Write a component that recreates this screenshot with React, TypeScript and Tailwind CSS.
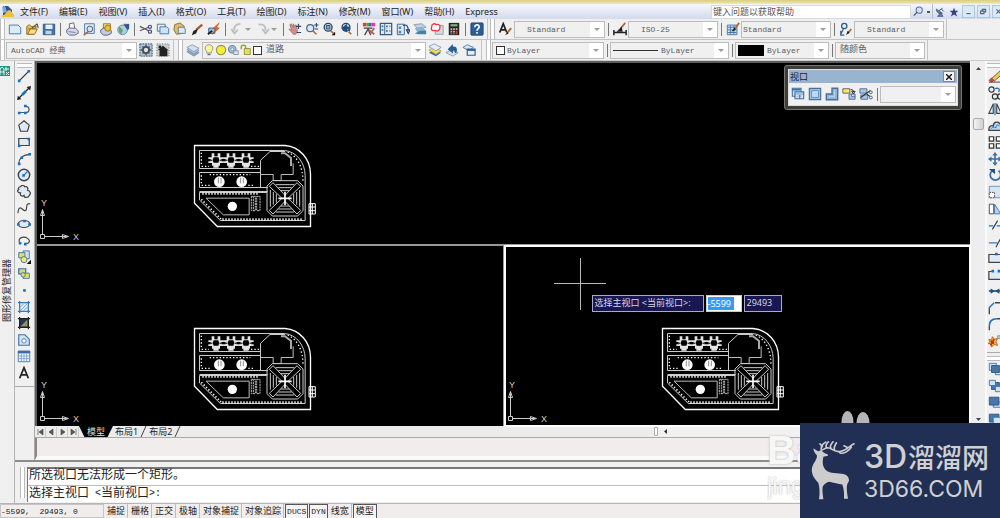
import type { ReactNode } from 'react';

const BLUE = '#3f6fa3';
const PALE = '#cfe2f3';

// All toolbar glyphs share a 16x16 grid
const icons: Record<string, ReactNode> = {
  new: <path d="M1.500 3.500h10l3 3v7h-13z" fill="#dcebf8" stroke={BLUE} />,
  open: (
    <>
      <path d="M2 5l3-2 2 2h6l-3 9H2z" fill="#e8bd4d" stroke="#8d6c22" />
      <path d="M8 7l6-5M14 2l1 5M4 8h8" stroke="#5d5533" strokeWidth="1.300" fill="none" />
      <path d="M3 14l3-6h8l-3 6z" fill="#f6dc85" stroke="#8d6c22" />
    </>
  ),
  save: (
    <>
      <path d="M1.500 2.500h13v12h-13z" fill="#3e73b1" stroke="#2d527e" />
      <path d="M4 3h8v5H4z" fill="#e9eff5" />
      <path d="M4 10h7v4H4z" fill="#c3d0de" />
    </>
  ),
  print: (
    <>
      <path d="M5 8V2l5-1 1 6" fill="#fff" stroke="#555c75" />
      <path d="M2 9l3-2h7l3 3v3l-4 2H5l-3-3z" fill="#d6d9e5" stroke="#555c75" />
      <path d="M4 11l8 1" stroke="#6a6fc1" />
    </>
  ),
  preview: (
    <>
      <path d="M3 2h11v11H3z" fill="#e4eef8" stroke={BLUE} />
      <circle cx="9" cy="8" r="3.300" fill="#d1e4f4" stroke="#38526e" />
      <path d="M7 11l-5 4" stroke="#a66b3a" strokeWidth="2" />
    </>
  ),
  publish: (
    <>
      <path d="M5 2h8v6H5z" fill="#f3e18a" stroke="#83733b" />
      <path d="M2 9l3-2h6l3 3v3l-4 2H5l-3-3z" fill="#c4cce1" stroke="#4d5b7b" />
      <circle cx="10" cy="7" r="3.500" fill="#edbd2c" stroke="#8b7026" />
    </>
  ),
  globe: (
    <>
      <circle cx="7.500" cy="9" r="5.500" fill="#a9cfe8" stroke="#6388a5" />
      <path d="M4 5l4 4-2 5c-3-2-4-6-2-9z" fill="#69a467" />
      <path d="M8 2h5v6z" fill="#c96b3d" />
      <path d="M9 3l4 6 2-1V2z" fill="#285c93" />
    </>
  ),
  cut: (
    <>
      <path d="M1 5l10 5M1 10l10-4" stroke="#555" strokeWidth="1.300" />
      <circle cx="12.500" cy="5.500" r="1.800" fill="none" stroke="#4b4f79" strokeWidth="1.400" />
      <circle cx="12.500" cy="11" r="1.800" fill="none" stroke="#4b4f79" strokeWidth="1.400" />
    </>
  ),
  copy: (
    <>
      <path d="M1.500 2.500h9v8h-9z" fill="#e2eef8" stroke={BLUE} />
      <path d="M4.500 5.500h8l2 2v6h-10z" fill={PALE} stroke={BLUE} />
    </>
  ),
  paste: (
    <>
      <path d="M2 3l6-2 5 4-2 8-7 1-3-5z" fill="#e1bd69" stroke="#81643a" />
      <path d="M6 6h6l2 2v5H6z" fill="#dce9f4" stroke="#597490" />
    </>
  ),
  brush: (
    <>
      <path d="M14 3L7 9" stroke="#a8552b" strokeWidth="2.500" />
      <path d="M9 8l-2 5-5 2 2-5z" fill="#222" />
    </>
  ),
  block: (
    <>
      <path d="M2 7h7v6H2z" fill="#9fc2e8" stroke="#2a4f83" />
      <path d="M14 1L7 7l3 1-4 6 8-7-3-1z" fill="#e6672a" stroke="#963a15" strokeWidth=".5" />
      <path d="M1 14l5-4" stroke="#222" strokeWidth="2" />
    </>
  ),
  undo: <path d="M12 2C7 2 4 5 5 10M1.500 8L5 13l4-4" stroke="#b9bcc0" strokeWidth="2" fill="none" />,
  redo: <path d="M3 3c6-1 8 2 8 7M7 8l4 5 4-5" stroke="#b9bcc0" strokeWidth="2" fill="none" />,
  pan: (
    <>
      <path d="M2 3l2-1 2 4V2l2 3 1-2 2 7-2 4H6L1 8l3 1z" fill="#cf8f8b" stroke="#985d5c" strokeWidth=".7" />
      <path d="M12 2v6M9 5h6M10 12h5" stroke="#27446e" strokeWidth="1.300" />
    </>
  ),
  zoom: (
    <>
      <circle cx="6" cy="7" r="4" fill="#d8e8f5" stroke="#4d6684" strokeWidth="1.400" />
      <path d="M9 10l4 4" stroke="#b46a3e" strokeWidth="2" />
      <path d="M13 1v5M10.500 3.500h5M11 8h4" stroke="#27446e" strokeWidth="1.200" />
    </>
  ),
  zoomwin: (
    <>
      <circle cx="7" cy="6" r="4.500" fill="#c9dff2" stroke="#2f4562" strokeWidth="1.500" />
      <path d="M5 4h4v4H5z" fill="#7fa9d0" stroke="#2f4562" />
      <path d="M10 10l3 3" stroke="#b46a3e" strokeWidth="2" />
      <path d="M15 11v4h-4z" fill="#111" />
    </>
  ),
  zoomprev: (
    <>
      <circle cx="8" cy="6" r="4.500" fill="#bdd7ee" stroke="#2f4562" strokeWidth="1.500" />
      <path d="M3 7l6-5v3c4 0 5 3 3 6-1-3-2-3-3-2v3z" fill="#1f4c84" />
      <path d="M11 11l3 3" stroke="#b46a3e" strokeWidth="2" />
    </>
  ),
  props: (
    <>
      <path d="M1 1h4v4H1z" fill="#e33" />
      <path d="M5 1h3v4H5z" fill="#4a4" />
      <path d="M8 1h3v4H8z" fill="#36c" />
      <path d="M11 1h4v4h-4z" fill="#e3a" />
      <path d="M2 7h10M3 15l4-7 3 7" stroke="#444" strokeWidth="1.500" fill="none" />
      <path d="M8 9l6 5M14 7l-5 7" stroke="#b5606b" strokeWidth="2" />
    </>
  ),
  dcenter: (
    <>
      <path d="M1.500 1.500h13v13h-13z" fill="#dcebf9" stroke="#345b8a" strokeWidth="1.400" />
      <path d="M6.500 2v12" stroke="#345b8a" />
      <path d="M3 4h2v2H3zM3 8h2v2H3zM8 4h2v2H8zM12 4h1v2h-1zM8 9h2v2H8zM12 9h1v2h-1z" fill="#4c6f97" />
      <path d="M8 7h2v1H8z" fill="#e5b22f" />
    </>
  ),
  toolpal: (
    <>
      <path d="M1.500 2.500h8v12h-8z" fill="#dcebf9" stroke="#345b8a" />
      <path d="M3 5h3v3H3zM3 10h3v3H3z" fill="#5c88b7" />
      <path d="M8 4c5-2 6 2 6 6M12 9l2 4 2-4z" fill="none" stroke="#27446e" strokeWidth="1.300" />
    </>
  ),
  sheets: (
    <>
      <path d="M1 3l9-1 5 4-9 2z" fill="#c8d4de" stroke="#8695a3" />
      <path d="M2 7l8-2 5 5-9 3z" fill="#86b4d2" />
      <path d="M2 13l6-3h7v4H6z" fill="#4d7fa1" />
    </>
  ),
  markup: (
    <>
      <path d="M6 4h9v10H6z" fill="#d9dde2" stroke="#919aa4" />
      <path d="M3 3c2-2 4 0 4 0s3-1 4 1-0 3 0 4-2 3-4 2-4 1-5-1 0-3 0-4 0-2 1-2z" fill="#fff" stroke="#e33841" strokeWidth="1.500" />
    </>
  ),
  calc: (
    <>
      <path d="M2 1h12v14H2z" fill="#262626" />
      <path d="M4 2.500h8V5H4z" fill="#79b477" />
      <path d="M4 7h2v2H4zM7 7h2v2H7zM10 7h2v2h-2zM4 10h2v2H4zM7 10h2v2H7zM4 13h2v1H4zM7 13h2v1H7z" fill="#d7b1ae" />
      <path d="M10 10h2v4h-2z" fill="#d83b36" />
    </>
  ),
  help: (
    <>
      <rect x="1" y="1" width="14" height="14" rx="1" fill="#2c5f98" stroke="#1c426d" />
      <path d="M5.500 6c0-4 5.500-3.500 5 0-.3 1.500-2.500 1.800-2.500 4M8 11.500v2" stroke="#fff" strokeWidth="1.800" fill="none" />
    </>
  ),
  textstyle: (
    <>
      <path d="M2 12L6 2l4 10M3.500 9h5" stroke="#222" strokeWidth="2" fill="none" />
      <path d="M15 7l-5 6" stroke="#b06a33" strokeWidth="2.200" />
      <path d="M11 11l-3 4 4-2z" fill="#222" />
    </>
  ),
  dimstyle: (
    <>
      <path d="M1 9v6M15 9v6M1 12h14" stroke="#222" strokeWidth="1.700" />
      <path d="M14 1L9 7" stroke="#b06a33" strokeWidth="2" />
      <path d="M10 5l-6 6h7z" fill="#222" />
    </>
  ),
  tablestyle: (
    <>
      <path d="M1.500 3.500h11v11h-11z" fill="#d1e4f8" stroke={BLUE} />
      <path d="M2 6h10M2 9h10M2 12h10M5 4v10M9 4v10" stroke={BLUE} />
      <path d="M15 1l-5 7" stroke="#b06a33" strokeWidth="2" />
      <path d="M10 6l-4 5 5-2z" fill="#222" />
    </>
  ),
  mleader: (
    <>
      <circle cx="6" cy="4.500" r="3" fill="#e4f1fb" stroke="#286095" strokeWidth="1.500" />
      <path d="M5 8l-3 6M2 10v5h4" stroke="#286095" strokeWidth="1.400" fill="none" />
      <path d="M14 8l-4 5" stroke="#b06a33" strokeWidth="2" />
      <path d="M10 10l-2 5 4-3z" fill="#222" />
    </>
  ),
  gear: (
    <>
      <path d="M1 1h14v14H1z" fill="#a7c4df" stroke="#345" strokeDasharray="2 1" />
      <circle cx="8" cy="8" r="3.500" fill="#dbe2e9" stroke="#4b4b4b" strokeWidth="2" />
      <path d="M8 2v3M8 11v3M2 8h3M11 8h3M4 4l2 2M10 10l2 2M12 4l-2 2M6 10l-2 2" stroke="#4b4b4b" strokeWidth="1.500" />
    </>
  ),
  home: (
    <>
      <path d="M1 1h14v14H1z" fill="#c9ccd0" stroke="#555" strokeDasharray="1 2" />
      <path d="M8 3l6 5h-1v7H4V8H2z" fill="#222" />
      <path d="M3 3h3v3H3z" fill="#222" />
    </>
  ),
  layers: (
    <>
      <path d="M1 10l6-3 8 4-6 4z" fill="#8fabc7" stroke="#62809f" strokeWidth=".7" />
      <path d="M1 7.500l6-3 8 4-6 4z" fill="#b1c9df" stroke="#62809f" strokeWidth=".7" />
      <path d="M1 5l6-3 8 4-6 4z" fill="#d3e1ed" stroke="#62809f" strokeWidth=".7" />
    </>
  ),
  bulb: (
    <>
      <path d="M5 10C1 6 3 1 8 1s7 5 3 9v2H5z" fill="#fbf59a" stroke="#87815b" />
      <path d="M6 13h4v2H6z" fill="#5a739a" />
    </>
  ),
  sun: <circle cx="8" cy="8" r="6.200" fill="#f7ec35" stroke="#918f5c" strokeWidth="1.400" />,
  vpfreeze: (
    <>
      <circle cx="7" cy="7" r="5" fill="#a7bfd4" stroke="#6886a4" strokeWidth="1.500" />
      <circle cx="7" cy="7" r="2" fill="#eee" stroke="#6886a4" />
      <path d="M9 9h6v5H9z" fill="#dfe6ec" stroke="#6886a4" />
    </>
  ),
  lock: (
    <>
      <path d="M3 7V4c0-3 6-3 6 0v3" fill="none" stroke="#a3a33b" strokeWidth="2" />
      <path d="M7 6h8v8H7z" fill="#e4df57" stroke="#807d2d" />
    </>
  ),
  layermake: (
    <>
      <path d="M1 11l6-3 8 3-6 4z" fill="#3f6fa3" />
      <path d="M1 8l6-3 8 4-6 4z" fill="#f5df59" stroke="#877a2e" strokeWidth=".6" />
      <path d="M1 4l6-3 8 4-6 4z" fill="#e8f0f7" stroke="#55789b" strokeWidth=".7" />
    </>
  ),
  layerprev: (
    <>
      <path d="M1 11l6-3 8 3-6 4z" fill="#d9e5f0" stroke="#55789b" strokeWidth=".7" />
      <path d="M3 7l6-6v3c5-1 6 5 3 8-1-3-2-4-3-3v3z" fill="#2a5c93" />
    </>
  ),
  layerstate: (
    <>
      <path d="M1 5l5-3 7 3-5 4z" fill="#d9e5f0" stroke="#55789b" />
      <path d="M6 7h9v7H6z" fill="#e7f0f8" stroke="#2a5c93" strokeWidth="1.300" />
      <path d="M6 7h9v2H6z" fill="#2a5c93" />
    </>
  ),
  // draw toolbar
  line: (
    <>
      <path d="M3 13L13 3" stroke="#333" strokeWidth="1.400" />
      <path d="M1 12h3v3H1zM12 1h3v3h-3z" fill="#1770c7" />
    </>
  ),
  xline: (
    <>
      <path d="M2 14L14 2" stroke="#222" strokeWidth="1.400" />
      <path d="M0 16l1-5 4 4zM16 0l-5 1 4 4z" fill="#222" />
      <path d="M6 10l4-4" stroke="#1770c7" strokeWidth="3" />
    </>
  ),
  pline: (
    <>
      <path d="M2 12h8c5 0 5-7 0-7" stroke="#555" strokeWidth="1.400" fill="none" />
      <path d="M1 11h3v3H1zM8 11h3v3H8zM8 3h3v3H8z" fill="#1770c7" />
    </>
  ),
  polygon: <path d="M8 2l6 5-2 7H4L2 7z" fill="#deebf6" stroke="#444" strokeWidth="1.400" />,
  rect: (
    <>
      <path d="M2 4h12v8H2z" fill="#deebf6" stroke="#444" strokeWidth="1.400" />
      <path d="M1 11h3v3H1zM12 3h3v3h-3z" fill="#1770c7" />
    </>
  ),
  arc: (
    <>
      <path d="M2 14c0-6 4-11 12-11" stroke="#444" strokeWidth="1.300" fill="none" />
      <path d="M1 12h3v3H1zM4 5h3v3H4zM13 1h3v3h-3z" fill="#1770c7" />
    </>
  ),
  circle: (
    <>
      <circle cx="8" cy="8" r="6.500" fill="#deebf6" stroke="#444" strokeWidth="1.700" />
      <path d="M7 9l5-5" stroke="#1770c7" strokeWidth="1.300" />
      <path d="M6 7h3v3H6z" fill="#1770c7" />
    </>
  ),
  cloud: (
    <path
      d="M4 2c1-2 4-2 5 0 3-1 4 2 3 4 4 1 4 4 2 6-1 3-6 3-6 0-3 2-5-1-4-3-4 0-4-3-2-4-1-1 0-3 2-3z"
      fill="#deebf6"
      stroke="#444"
      strokeWidth="1.400"
    />
  ),
  spline: <path d="M1 14c1-9 4-6 6-4s4 1 4-3 2-4 4-4" stroke="#444" strokeWidth="1.300" fill="none" />,
  ellipse: (
    <>
      <ellipse cx="8" cy="8" rx="6.500" ry="4" fill="#deebf6" stroke="#444" strokeWidth="1.400" />
      <path d="M0 7h3v3H0zM13 7h3v3h-3zM7 3h3v3H7z" fill="#1770c7" />
    </>
  ),
  ellipsearc: (
    <>
      <path d="M3 10C0 4 8 2 12 5c4 3 2 6-2 6" fill="#eef3f8" stroke="#444" strokeWidth="1.300" />
      <path d="M2 9h3v3H2zM8 10h3v3H8z" fill="#1770c7" />
    </>
  ),
  insert: (
    <>
      <path d="M7 1h7v9H7z" fill="#cfe2f3" stroke={BLUE} />
      <path d="M2 3h7v6H2z" fill="#dfdf63" stroke={BLUE} />
      <circle cx="8" cy="11" r="3.500" fill="#eee96c" stroke={BLUE} />
      <path d="M16 11v5h-5z" fill="#111" />
    </>
  ),
  makeblock: (
    <>
      <path d="M2 2h8v6H2z" fill="#cbd98c" stroke={BLUE} strokeWidth="1.400" />
      <path d="M7 7h7v6H7z" fill="#e8e269" stroke={BLUE} />
      <circle cx="7" cy="9" r="2.500" fill="#e8e269" stroke={BLUE} />
    </>
  ),
  point: <path d="M7 7h3v3H7z" fill="#1770c7" />,
  hatch: (
    <>
      <path d="M3 3h10v10H3z" fill="#dceaf6" />
      <path d="M4 8l4-4M4 12l8-8M8 12l4-4" stroke="#7ba7cf" />
      <path d="M3 1v14M13 1v14M1 3h14M1 13h14" stroke="#3a78b5" strokeWidth="1.400" />
    </>
  ),
  gradient: (
    <>
      <path d="M3 3h10v10H3z" fill="#26355a" />
      <path d="M4 12l8-8v8z" fill="#96965b" />
      <path d="M3 1v14M13 1v14M1 3h14M1 13h14" stroke="#222" strokeWidth="1.400" />
    </>
  ),
  region: (
    <>
      <path d="M2 2h7l5 5v7H2z" fill="#d3e5f5" stroke={BLUE} strokeWidth="1.300" />
      <circle cx="8" cy="9" r="2.500" fill="#fff" stroke={BLUE} />
    </>
  ),
  table: (
    <>
      <path d="M1.500 2.500h13v12h-13z" fill="#eff6fc" stroke="#4773a8" />
      <path d="M1 2h14v3H1z" fill="#386dab" />
      <path d="M2 8h12M2 11h12M5 5v9M8 5v9M11 5v9" stroke="#7ba4d1" />
    </>
  ),
  mtext: <path d="M3 14L8 2l5 12M4.500 10h7" stroke="#222" strokeWidth="2" fill="none" />,
  // modify toolbar
  erase: (
    <>
      <path d="M15 1L4 11l3 3L17 5z" fill="#efc85d" stroke="#6b5528" />
      <path d="M4 10l-3 3 3 2 3-2z" fill="#e04938" stroke="#733" strokeWidth=".6" />
      <path d="M1 15h15" stroke="#333" />
    </>
  ),
  copyobj: (
    <>
      <circle cx="4" cy="4" r="3" fill="#e3eff9" stroke="#333" strokeWidth="1.300" />
      <path d="M8 3c4-2 6 1 4 4" stroke="#2a68ac" strokeWidth="1.400" fill="none" />
      <circle cx="8" cy="12" r="3" fill="#e3eff9" stroke="#333" strokeWidth="1.300" />
      <circle cx="14" cy="12" r="3" fill="none" stroke="#333" strokeWidth="1.300" />
    </>
  ),
  mirror: (
    <>
      <path d="M6 2v11H1z" fill="#e3eff9" stroke="#444" strokeWidth="1.300" />
      <path d="M10 2v11h5z" fill="#e3eff9" stroke="#444" strokeWidth="1.300" />
      <path d="M8 1v14" stroke="#1770c7" strokeWidth="1.300" />
    </>
  ),
  offset: (
    <>
      <path d="M1 12c0-4 3-5 5-4 0-5 6-6 8-2l2 1v6H1z" fill="#b9d5ef" stroke="#444" strokeWidth="1.500" />
      <path d="M4 11c1-2 3-2 5-1 0-3 2-4 4-2" fill="none" stroke="#1770c7" />
    </>
  ),
  array: <path d="M1.500 2h5v5h-5zM9.500 2h5v5h-5zM1.500 10h5v5h-5zM9.500 10h5v5h-5z" fill="#fff" stroke="#333" strokeWidth="1.400" />,
  move: (
    <>
      <path d="M8 2v12M2 8h12" stroke="#3b6fa5" strokeWidth="1.800" />
      <path d="M8 0l3 4H5zM8 16l3-4H5zM0 8l4-3v6zM16 8l-4-3v6z" fill="#3b6fa5" />
    </>
  ),
  rotate: (
    <>
      <path d="M5 3a6 6 0 1 0 7 0" stroke="#3b6fa5" strokeWidth="2" fill="none" />
      <path d="M1 1h7v6z" fill="#2a4f7b" />
    </>
  ),
  scale: (
    <>
      <path d="M1.500 1.500h14v13h-14z" fill="#d5e5f3" stroke="#6d8eaf" />
      <path d="M1.500 8.500h6v6h-6z" fill="#fff" stroke="#444" strokeDasharray="2 1" />
    </>
  ),
  stretch: (
    <>
      <path d="M1.500 2.500h5v11h-5z" fill="#fff" stroke="#444" />
      <path d="M7.500 2.500l7 11h-7z" fill="#b9d5ef" stroke={BLUE} />
    </>
  ),
  trim: (
    <>
      <path d="M1 9h5M10 9h6" stroke="#1770c7" strokeWidth="1.300" />
      <path d="M5 13L11 3" stroke="#333" strokeWidth="1.200" />
    </>
  ),
  extend: (
    <>
      <path d="M1 9h10" stroke="#1770c7" strokeWidth="1.300" />
      <path d="M9 14L15 3" stroke="#333" strokeWidth="1.200" />
    </>
  ),
  breakpt: (
    <>
      <path d="M1 4h15v9H1z" fill="#dfebf6" stroke="#444" strokeWidth="1.400" />
      <path d="M8 2h3v3H8z" fill="#1770c7" />
    </>
  ),
  breakln: (
    <>
      <path d="M5 4H1v9h15V4h-3" fill="#dfebf6" stroke="#444" strokeWidth="1.400" />
      <path d="M4 2h3v3H4zM11 2h3v3h-3z" fill="#1770c7" />
    </>
  ),
  join: (
    <>
      <path d="M1 8h14" stroke="#234f7e" strokeWidth="1.800" />
      <path d="M3 5l5 3-5 3zM13 5L8 8l5 3z" fill="#234f7e" />
    </>
  ),
  chamfer: (
    <>
      <path d="M1.500 15V8M8 2h8" stroke="#444" strokeWidth="1.500" />
      <path d="M1 8l6-6" stroke="#1770c7" strokeWidth="1.600" />
    </>
  ),
  fillet: (
    <>
      <path d="M1.500 15v-5M10 2h6" stroke="#444" strokeWidth="1.500" />
      <path d="M1.500 10c0-5 3-8 8.500-8" stroke="#1770c7" strokeWidth="1.900" fill="none" />
    </>
  ),
  explode: (
    <>
      <path d="M1 6l3 1 1-4 2 3 4-1-2 4 2 4-4-1-3 3-1-4H0l2-2z" fill="#f7c434" stroke="#b4591f" />
      <path d="M3 8l4 3M7 6l-4 7" stroke="#c5281d" strokeWidth="2" />
      <path d="M11 2h3v3h-3z" fill="#ccd6df" stroke="#888" />
    </>
  ),
  front: (
    <>
      <path d="M1.500 1.500h8v8h-8zM8.500 8.500h7v6h-7z" fill="#d1e3f3" stroke={BLUE} />
      <path d="M4 4h9v8H4z" fill="#4676ab" stroke="#2e5581" />
    </>
  ),
  back: (
    <>
      <path d="M4 4h9v8H4z" fill="#4676ab" stroke="#2e5581" />
      <path d="M1.500 1.500h7v6h-7zM8.500 8.500h7v6h-7z" fill="#d1e3f3" stroke={BLUE} />
    </>
  ),
  above: (
    <>
      <path d="M6 8h9v6H6z" fill="#d1e3f3" stroke={BLUE} />
      <path d="M1.500 2.500h11v9h-11z" fill="#4676ab" stroke="#2e5581" />
    </>
  ),
  under: (
    <>
      <path d="M1.500 2.500h11v9h-11z" fill="#4676ab" stroke="#2e5581" />
      <path d="M6 6h9v8H6z" fill="#d1e3f3" stroke={BLUE} />
    </>
  ),
  // viewport toolbar
  vpdialog: (
    <>
      <path d="M1.500 1.500h10v9h-10z" fill="#cfe2f3" stroke={BLUE} strokeWidth="1.200" />
      <path d="M1 2h10v2H1zM5 6h10v3H5z" fill={BLUE} />
      <path d="M4.500 5.500h10v8h-10zM10 9v5" fill="#cfe2f3" fillOpacity=".7" stroke={BLUE} strokeWidth="1.200" />
    </>
  ),
  vpsingle: (
    <>
      <path d="M1.500 1.500h13v13h-13z" fill="#9fbfe0" stroke="#4a6f98" strokeWidth="1.300" />
      <path d="M4 4h8v8H4z" fill="#b9d8f2" stroke="#6490be" />
    </>
  ),
  vppoly: (
    <>
      <path d="M8 1.500h6.500v13h-13V8H8z" fill="#8fb5dc" stroke="#4a6f98" strokeWidth="1.600" />
      <path d="M11 4v7H4" stroke="#c8def2" fill="none" />
    </>
  ),
  vpobject: (
    <>
      <path d="M1 2h8v5H1z" fill="#f4ea70" stroke="#555" />
      <path d="M8 8h7v6H8zM11 8v3h4" fill="#a8c6e4" stroke="#4a6f98" />
      <path d="M10 3c3 0 3 1 3 3M11 5l2 3 2-3z" fill="none" stroke="#222" />
    </>
  ),
  vpclip: (
    <>
      <path d="M1 2h8v5H1zM2 9h8v5H2z" fill="#a8c6e4" stroke="#4a6f98" />
      <path d="M2 12l11-8M9 8l6 5" stroke="#333" strokeWidth="1.200" />
      <circle cx="13.500" cy="6" r="1.600" fill="#fff" stroke="#344d7a" />
      <circle cx="13.500" cy="12" r="1.600" fill="#fff" stroke="#344d7a" />
    </>
  ),
  search: (
    <>
      <circle cx="9" cy="6" r="4.500" fill="#d6e3f4" stroke="#5b6fa6" strokeWidth="1.500" />
      <path d="M6 9l-5 5" stroke="#4d5f97" strokeWidth="2" />
    </>
  ),
  satellite: (
    <>
      <path d="M2 3c0 6 5 9 10 7zM4 15h9l-4-6z" fill="#6378ab" stroke="#3a4b80" />
      <path d="M6 6l6-4M10 3l4 4" stroke="#3a4b80" strokeWidth="1.500" />
    </>
  ),
  star: <path d="M8 1l2 5h5l-4 3.500 2 5.500-5-3-5 3 2-5.500L1 6h5z" fill="#35457f" />,
};

function Icon({ name, className = 'w-[14px] h-[14px]' }: { name: string; className?: string }) {
  return (
    <svg viewBox="0 0 16 16" fill="none" aria-hidden="true" className={`shrink-0 ${className}`}>
      {icons[name]}
    </svg>
  );
}

function Tool({ name }: { name: string }) {
  return (
    <button aria-label={name} className="w-[17px] h-full shrink-0 flex items-center justify-center">
      <Icon name={name} />
    </button>
  );
}

const Tools = ({ names }: { names: string[] }) => (
  <>
    {names.map((n) => (
      <Tool key={n} name={n} />
    ))}
  </>
);

const Sep = () => (
  <div className="w-[6px] shrink-0 flex justify-center">
    <div className="w-px h-[13px] bg-[#777]" />
  </div>
);

const Grip = () => <div className="w-[5px] h-full shrink-0 border-x border-[#bdbdbd] bg-white mr-px" />;

const Caret = () => (
  <svg viewBox="0 0 6 3" className="w-[6px] h-[3px]" aria-hidden="true">
    <path d="M0 0h6L3 3z" fill="#9c9c9c" />
  </svg>
);

type ComboProps = { label: string; value: string; className: string; pad?: string; children?: ReactNode };

function Combo({ label, value, className, pad = 'pl-1', children }: ComboProps) {
  return (
    <label className={`h-[17px] shrink-0 flex items-center border border-[#bcbcbc] bg-[#f0f0f0] ${className}`}>
      {children}
      <select
        aria-label={label}
        className={`flex-1 min-w-0 h-full pt-px appearance-none bg-transparent text-[#5c5c5c] outline-none ${pad}`}
      >
        <option>{value}</option>
      </select>
      <span className="w-[14px] h-full bg-white flex items-center justify-center">
        <Caret />
      </span>
    </label>
  );
}

const menus = ['文件(F)', '编辑(E)', '视图(V)', '插入(I)', '格式(O)', '工具(T)', '绘图(D)', '标注(N)', '修改(M)', '窗口(W)', '帮助(H)', 'Express'];

function MenuBar() {
  return (
    <header className="h-[15px] shrink-0 flex items-center bg-linear-to-b from-[#f6f7fc] to-[#d3daec] text-[9px] leading-[14px] text-[#222]">
      <svg viewBox="0 0 12 13" className="w-3 h-[13px] mx-[2px] shrink-0" aria-hidden="true">
        <path d="M1 1h5l4 4v5H1z" fill="#29568b" />
        <path d="M0 2l3-1 2 6-4 1z" fill="#7faed6" />
        <path d="M0 10c4 1 4-5 8-5l4 5v2H0z" fill="#edc238" />
      </svg>
      <nav className="flex gap-[11px] pl-[4px] whitespace-nowrap">
        {menus.map((m) => (
          <button key={m}>{m}</button>
        ))}
      </nav>
      <input
        aria-label="帮助搜索"
        placeholder="键入问题以获取帮助"
        className="ml-auto w-[200px] h-[14px] bg-white border border-[#d5d9e4] px-px placeholder:text-[#555]"
      />
      <button aria-label="搜索" className="w-[22px] h-full flex items-center justify-center gap-[3px] border-r border-[#b9bfd0]">
        <Icon name="search" className="w-[11px] h-[11px]" />
        <span className="w-[3px] h-[2px] bg-[#555]" />
      </button>
      <button aria-label="通讯中心" className="w-[14px] flex justify-center">
        <Icon name="satellite" className="w-[10px] h-[10px]" />
      </button>
      <button aria-label="收藏夹" className="w-[14px] flex justify-center">
        <Icon name="star" className="w-[10px] h-[10px]" />
      </button>
      <div className="flex gap-[2px] pl-px w-[39px] overflow-hidden">
        {['M4 9h5', 'M3 6h4v3H3zM5 6V4h4v3H7', 'M4 4l5 5M9 4l-5 5'].map((d, i) => (
          <button key={i} aria-label={['最小化', '还原', '关闭'][i]} className="w-[13px] h-[13px] shrink-0 border border-[#adc6e0] bg-[#dbe9f7]">
            <svg viewBox="0 0 13 13" aria-hidden="true">
              <path d={d} stroke="#52637c" strokeWidth="1.300" fill="none" />
            </svg>
          </button>
        ))}
      </div>
    </header>
  );
}

function StandardBar() {
  return (
    <div className="h-[21px] shrink-0 flex items-center border-b border-[#c4c4c4] font-['Liberation_Mono','Noto_Sans_CJK_SC',monospace] text-[8px]">
      <Grip />
      <Tools names={['new', 'open', 'save']} />
      <Sep />
      <Tools names={['print', 'preview', 'publish', 'globe']} />
      <Sep />
      <Tools names={['cut', 'copy', 'paste', 'brush', 'block']} />
      <Sep />
      <Tool name="undo" />
      <button aria-label="undo list" className="w-[9px]"><Caret /></button>
      <Tool name="redo" />
      <button aria-label="redo list" className="w-[9px]"><Caret /></button>
      <Sep />
      <Tools names={['pan', 'zoom', 'zoomwin', 'zoomprev']} />
      <Sep />
      <Tools names={['props', 'dcenter', 'toolpal', 'sheets', 'markup', 'calc']} />
      <Sep />
      <Tool name="help" />
      <div className="w-[3px] h-full border-r border-[#c4c4c4] mr-[2px]" />
      <Grip />
      <Tool name="textstyle" />
      <Combo label="文字样式" value="Standard" className="w-[91px] ml-px" pad="pl-3" />
      <Sep />
      <Tool name="dimstyle" />
      <Combo label="标注样式" value="ISO-25" className="w-[90px]" pad="pl-3" />
      <Sep />
      <Tool name="tablestyle" />
      <Combo label="表格样式" value="Standard" className="w-[90px]" pad="pl-px" />
      <Sep />
      <Tool name="mleader" />
      <Combo label="多重引线样式" value="Standard" className="w-[90px]" pad="pl-3" />
      <div className="w-[3px] h-full border-r border-[#c4c4c4]" />
    </div>
  );
}

function LayerBar() {
  return (
    <div className="h-[20px] shrink-0 flex items-center font-['Liberation_Mono','Noto_Sans_CJK_SC',monospace] text-[8px]">
      <Grip />
      <Combo label="工作空间" value="AutoCAD 经典" className="w-[131px]" />
      <Tools names={['gear', 'home']} />
      <div className="w-[3px] h-full border-r border-[#c4c4c4] mr-[4px]" />
      <Grip />
      <Tool name="layers" />
      <Combo label="图层" value="道路" className="w-[224px] ml-px text-[9px]" pad="pl-[4px]">
        {['bulb', 'sun', 'vpfreeze', 'lock'].map((n) => (
          <Icon key={n} name={n} className="w-3 h-3" />
        ))}
        <span className="w-[9px] h-[9px] border border-[#333] bg-white ml-[2px]" />
      </Combo>
      <Tools names={['layermake', 'layerprev', 'layerstate']} />
      <div className="w-[5px] h-full border-r border-[#c4c4c4] mr-[4px]" />
      <Grip />
      <Combo label="颜色" value="ByLayer" className="w-[112px]" pad="pl-[2px]">
        <span className="w-[9px] h-[9px] border border-[#333] bg-white ml-[3px]" />
      </Combo>
      <Sep />
      <Combo label="线型" value="ByLayer" className="w-[119px]" pad="pl-[3px]">
        <span className="w-[45px] h-px bg-[#333] ml-[2px]" />
      </Combo>
      <Sep />
      <Combo label="线宽" value="ByLayer" className="w-[94px]" pad="pl-[3px]">
        <span className="w-[26px] h-[11px] bg-black ml-[2px]" />
      </Combo>
      <Sep />
      <Combo label="打印样式" value="随颜色" className="w-[90px] text-[9px]" />
      <div className="w-[3px] h-full border-r border-[#c4c4c4]" />
    </div>
  );
}

// Site plan: lots, pools and the terraced plaza
function SitePlan() {
  return (
    <svg viewBox="42 39 372 258" className="absolute left-[156px] top-[80px] w-[124px] h-[86px]" fill="none" stroke="#ddd" strokeWidth="3" aria-hidden="true">
      <path d="M46.500 46.500H318C362 50 394 86 394.500 132V289.500H115L46.500 220z" stroke="#fff" strokeWidth="4" />
      <path d="M61.500 61.500H316C352 64 378 98 378.500 136V271.500H124L61.500 210V187.500H264" stroke="#ccc" />
      <path d="M61.500 61.500V115.500H244.500M61.500 127.500H244.500M61.500 127.500V172.500H266M61.500 184.500H266M244.500 172V91L273 64.500H318" stroke="#ccc" />
      <path d="M244.500 133.500H282.500V151.500H306.500V133.500H342.500V100" stroke="#bbb" />
      <path d="M306 70h12l18 14v24" strokeWidth="6" stroke="#aaa" />
      <path d="M326 66C352 78 372 106 372 156" stroke="#fff" strokeWidth="4" strokeDasharray="4 7" />
      <path d="M67 68V108M68 109H90M206 109H244M92 134H214M68 166H96M208 166H222M67 136V160" strokeWidth="4" stroke="#fff" strokeDasharray="4 6" />
      <path d="M70 191H236" stroke="#fff" strokeWidth="6" strokeDasharray="4 5" />
      <path d="M67 208L126 267" stroke="#fff" strokeWidth="5" strokeDasharray="4 6" />
      <path d="M130 268H372" stroke="#fff" strokeWidth="7" strokeDasharray="4 5" />
      {[111, 156, 201].map((x) => (
        <g key={x} transform={`translate(${x} 90)`} stroke="none" fill="#e4e4e4">
          <path d="M-13-20h8v9h10v-9h8v12h10v5h-7v7h7v5H12v8H8v6H-8v-6h-4V9h-11V4h7v-7h-7v-5h10z" />
          <path d="M-7-8H7L10 0 7 8H-7L-10 0z" fill="#000" />
          <path d="M-1-20h2v9h-2zM-16-1h5v3h-5zM11-1h5v3h-5z" fill="#000" />
        </g>
      ))}
      {[121, 188].map((x) => (
        <g key={x} transform={`translate(${x} 155)`}>
          <circle r="16" fill="#fff" stroke="none" />
          <path d="M-3-12V5M5-12V5" stroke="#555" strokeWidth="2" />
        </g>
      ))}
      <path d="M81 204.500H210.500V254.500H133z" stroke="#bbb" />
      <circle cx="160" cy="229" r="14" fill="#fff" stroke="none" />
      <path d="M217 199h12v43h-12zM233 199h10v43h-10zM223 199v43" stroke="#bbb" strokeDasharray="6 2" />
      <g transform="translate(318 205)">
        <path d="M-38-53H38L54-37V37L38 53H-38L-54 37V-37z" stroke="#ccc" />
        <path d="M-28-41H28M-20-32H20M-14-23H14M-28 41H28M-20 32H20M-14 23H14M-44-25V25M-35-19V19M-26-13V13M44-25V25M35-19V19M26-13V13" stroke="#ccc" />
        <path d="M-36-47L0-9 36-47 47-36 9 0 47 36 36 47 0 9-36 47-47 36-9 0-47-36z" fill="#000" stroke="#ccc" />
        <path d="M0-20V20M-20 0H20" stroke="#fff" strokeWidth="5" />
      </g>
      <path d="M390 221h19v31h-19zM390 231h19M390 242h19M400 221v31" stroke="#fff" />
    </svg>
  );
}

function UcsIcon() {
  return (
    <svg viewBox="0 0 48 46" className="absolute left-0 bottom-0 w-12 h-[46px]" fill="none" stroke="#ccc" aria-hidden="true">
      <path d="M3.500 36.500h4v4h-4zM5.500 36V12M8 38.500h22" />
      <path d="M3.500 17.500l2-6 2 6zM25.500 36.500l6 2-6 2z" />
      <text x="4" y="8" fontSize="9" fill="#ccc" stroke="none" fontFamily="Liberation Sans, sans-serif">Y</text>
      <text x="36" y="42" fontSize="9" fill="#ccc" stroke="none" fontFamily="Liberation Sans, sans-serif">X</text>
    </svg>
  );
}

function Pane({ className = '', children }: { className?: string; children?: ReactNode }) {
  return (
    <div className={`relative overflow-hidden bg-black ${className}`}>
      <SitePlan />
      <UcsIcon />
      {children}
    </div>
  );
}

function DynamicInput() {
  return (
    <>
      <svg viewBox="0 0 52 52" className="absolute left-[49px] top-[12px] w-[52px] h-[52px]" aria-hidden="true">
        <path d="M26.500 0v52M0 25.500h52" stroke="#bbb" />
      </svg>
      <div className="absolute left-[87px] top-[49px] flex gap-[2px] h-[17px] text-[9px] leading-[14px] text-[#d5d5e6] whitespace-nowrap">
        <span className="w-[112px] px-[2px] border border-[#a9a9c8] bg-[#191752]">选择主视口 &lt;当前视口&gt;:</span>
        <span className="w-9 p-px bg-white border border-[#ccc] flex">
          <input aria-label="X 坐标" defaultValue="-5599" className="w-[26px] h-full bg-[#3399ff] text-white outline-none" />
        </span>
        <input aria-label="Y 坐标" defaultValue="29493" className="w-[38px] px-[2px] border border-[#a9a9c8] bg-[#191752] outline-none" />
      </div>
    </>
  );
}

function ViewportToolbar() {
  return (
    <section className="absolute right-[8px] top-[2px] w-[178px] rounded-[3px] border border-[#77776f] bg-[#3e3f3b] p-[3px] text-[9px]">
      <div className="bg-[#f0f0f0] border border-[#ddd]">
        <div className="h-[13px] flex items-center justify-between bg-[#99b4d1] pl-px pr-[2px] text-[#222]">
          <span className="leading-[13px]">视口</span>
          <button aria-label="关闭" className="w-3 h-[11px] bg-[#f4f4f4] border border-[#888] flex items-center justify-center">
            <svg viewBox="0 0 6 6" className="w-[6px] h-[6px]" aria-hidden="true">
              <path d="M0 0l6 6M6 0L0 6" stroke="#111" strokeWidth="1.400" />
            </svg>
          </button>
        </div>
        <div className="h-[22px] flex items-center">
          <Tools names={['vpdialog', 'vpsingle', 'vppoly', 'vpobject', 'vpclip']} />
          <Sep />
          <Combo label="视口比例" value="" className="flex-1 mr-px" />
        </div>
      </div>
    </section>
  );
}

function VScroll() {
  return (
    <div className="w-[17px] shrink-0 bg-[#eee] border-r-2 border-l border-[#fafafa] flex flex-col items-center">
      <svg viewBox="0 0 5 3" className="w-[5px] h-[3px] mt-[6px]" aria-hidden="true"><path d="M0 3h5L2.500 0z" fill="#444" /></svg>
      <div className="w-[11px] h-[12px] mt-[48px] rounded-[2px] border border-[#a8a8a8] bg-linear-to-r from-[#f4f4f4] to-[#d0d0d4]" />
      <svg viewBox="0 0 5 3" className="w-[5px] h-[3px] mt-auto mb-[5px]" aria-hidden="true"><path d="M0 0h5L2.500 3z" fill="#444" /></svg>
    </div>
  );
}

function LayoutTabs() {
  return (
    <div className="h-[12px] shrink-0 flex items-center border-b border-[#aaa] bg-[#ececec] text-[9px] leading-[11px] text-[#222]">
      {['M3 2v6M8 2v6L4 5z', 'M7 2v6L3 5z', 'M4 2v6l4-3z', 'M8 2v6M3 2v6l4-3z'].map((d, i) => (
        <button key={i} aria-label={['第一个', '上一个', '下一个', '最后一个'][i]} className="w-[11px] h-[10px] border-r border-[#ccc]">
          <svg viewBox="0 0 10 10" aria-hidden="true"><path d={d} fill="#555" stroke="#555" strokeWidth=".7" /></svg>
        </button>
      ))}
      <button className="w-[34px] h-full bg-black text-[#ddd] [clip-path:polygon(0_0,100%_0,84%_100%,16%_100%)]">模型</button>
      {['布局1', '布局2'].map((t) => (
        <span key={t} className="h-full flex">
          <button className="px-[2px]">{t}</button>
          <svg viewBox="0 0 7 11" className="w-[7px] h-[11px]" aria-hidden="true"><path d="M6 0L1 11" stroke="#444" /></svg>
        </span>
      ))}
      <div className="ml-auto w-[35%] h-full flex items-center gap-[6px] bg-[#f1f1f1]">
        <span className="w-[4px] h-[9px] rounded-[1px] border border-[#aaa] bg-white" />
        <svg viewBox="0 0 3 5" className="w-[3px] h-[5px]" aria-hidden="true"><path d="M3 0v5L0 2.500z" fill="#333" /></svg>
      </div>
    </div>
  );
}

const drawTools = [
  'line', 'xline', 'pline', 'polygon', 'rect', 'arc', 'circle', 'cloud', 'spline', 'ellipse',
  'ellipsearc', 'insert', 'makeblock', 'point', 'hatch', 'gradient', 'region', 'table', 'mtext',
];
const modifyTools = [
  'erase', 'copyobj', 'mirror', 'offset', 'array', 'move', 'rotate', 'scale', 'stretch',
  'trim', 'extend', 'breakpt', 'breakln', 'join', 'chamfer', 'fillet', 'explode',
];

const HGrip = () => <div className="h-[5px] w-full shrink-0 border-y border-[#bbb] bg-white" />;

function VTools({ names, className }: { names: string[]; className: string }) {
  return (
    <div className={`flex flex-col ${className}`}>
      {names.map((n) => (
        <button key={n} aria-label={n} className="flex-1 flex items-center">
          <Icon name={n} />
        </button>
      ))}
    </div>
  );
}

function CommandWindow() {
  return (
    <section className="h-[43px] shrink-0 flex border-t-2 border-[#8c8c8c] bg-[#f0f0f0] pt-[5px] font-['Liberation_Mono','Noto_Sans_CJK_SC',monospace] text-[12px] text-[#222]">
      <div className="w-[5px] h-[31px] ml-[5px] mr-[2px] border-x border-[#bbb] bg-white" />
      <div className="flex-1 h-[35px] border-t-2 border-l border-[#777] bg-white">
        <p className="h-[17px] pl-px leading-[14px] border-b border-[#bbb]">所选视口无法形成一个矩形。</p>
        <label className="flex pl-px leading-[16px] whitespace-pre">
          选择主视口<span className="text-[10px]"> &lt;</span>当前视口<span className="text-[10px]">&gt;:</span>
          <input className="flex-1 h-[15px] outline-none" />
        </label>
      </div>
    </section>
  );
}

const modes = [
  ['捕捉', false], ['栅格', false], ['正交', false], ['极轴', false], ['对象捕捉', false],
  ['对象追踪', false], ['DUCS', true], ['DYN', true], ['线宽', false], ['模型', true],
] as const;

function StatusBar() {
  return (
    <footer className="h-[15px] shrink-0 flex items-center border-t border-[#b5b5b5] bg-[#f1edec] font-['Liberation_Mono','Noto_Sans_CJK_SC',monospace] text-[9px] leading-[12px] text-[#222]">
      <span className="w-[104px] h-full pt-px border border-[#c5c5c5] text-[8px] whitespace-pre">-5599,  29493, 0</span>
      {modes.map(([label, on]) => (
        <button
          key={label}
          className={`h-full ml-px whitespace-nowrap border-r ${on ? 'border-l border-t border-[#555] bg-[#f6f4f4]' : 'pt-[2px] border-[#bbb]'} ${
            label.startsWith('D') ? 'px-px text-[8px]' : 'px-[2px]'
          }`}
        >
          {label}
        </button>
      ))}
    </footer>
  );
}

function Brand() {
  return (
    <div className="absolute right-0 bottom-0 w-[200px] h-[95px] bg-[#222f55] text-[#d0d0d0] flex items-center pl-[11px]">
      <svg viewBox="0 0 132 176" className="w-[44px] h-[59px] shrink-0" fill="#ccc" aria-hidden="true">
        <path d="M7 22c4 2 9 6 14 8l10-3c5 6 11 10 19 12l1 5-14 3c-2 12-4 24 5 37 9 12 29 11 50 14 14 2 22 8 22 20-1 5-5 9-6 14-2 13 1 27 3 41h-12c1-16 0-29-5-43-11-1-26-6-39-8-11 2-16 8-20 15-2 14 1 25 2 37H24c3-17 2-34-2-49C8 112 0 96 3 80c3-14 15-23 15-37-5-5-10-12-11-21z" />
        <path
          d="M31 27C29 14 36 7 44 3M34 16L27 8M31 27c6 0 9-6 17-7 12-2 19 13 38 11 19-1 28-16 43-23M48 20C40 13 48 8 52 2M60 21C54 13 61 9 66 2M71 27c-5-8 2-14 5-22M85 31c-1 6 8 7 19 2 8-4 14-9 17-15M108 18L99 14"
          fill="none"
          stroke="#ccc"
          strokeWidth="5"
          strokeLinecap="round"
        />
      </svg>
      <div className="pl-[9px] pt-[4px] flex flex-col whitespace-nowrap">
        <div className="flex items-center h-[32px]">
          <span className="font-[Inter,sans-serif] text-[32px] leading-8 w-[44px] font-medium">3D</span>
          <span className="font-['Noto_Sans_CJK_SC',sans-serif] text-[27px] leading-8 font-medium">溜溜网</span>
        </div>
        <span className="font-[Inter,sans-serif] text-[23px] leading-[32px]">3D66.COM</span>
      </div>
    </div>
  );
}

export default function App() {
  return (
    <div className="relative h-screen w-full overflow-hidden flex flex-col bg-[#f0f0f0] font-['Noto_Sans','Noto_Sans_CJK_SC',sans-serif]">
      <div className="h-1 shrink-0 bg-linear-to-b from-[#d8ce80] to-[#efe9bd]" />
      <MenuBar />
      <StandardBar />
      <LayerBar />

      <main className="flex-1 min-h-0 flex border-t border-[#ccc]">
        <aside className="w-[15px] shrink-0 border-r border-[#b5b5b5] flex flex-col text-[9px] text-[#222]">
          <svg viewBox="0 0 10 10" className="w-[10px] h-[10px] mt-[5px]" aria-hidden="true">
            <path d="M0 0h10v10H0z" fill="#25967f" />
            <path d="M0 9V3l2-2 2 2v6M0 6h4M6 1v4M5 3h4M6 9l3-3M6 6l3 3" stroke="#e6fff8" fill="none" />
          </svg>
          <span className="mt-[183px] leading-[13px] rotate-180 [writing-mode:vertical-rl] [text-orientation:sideways]">图形修复管理器</span>
        </aside>

        <div className="flex-1 min-w-0 flex flex-col">
          <div className="flex-1 min-h-0 flex">
            <div className="w-[20px] shrink-0 border-r border-[#aaa]">
              <div className="border-b border-[#aaa] pt-[2px] pl-[2px] pr-[2px] pb-[5px]">
                <HGrip />
                <VTools names={drawTools} className="h-[313px]" />
              </div>
            </div>

            <div className="flex-1 min-w-0 flex flex-col">
              <div className="flex-1 min-h-0 flex">
                <div className="relative flex-1 min-w-0 grid grid-cols-2 grid-rows-2 gap-[2px] border-t-2 border-l-2 border-[#5c5c5c] bg-[#999]">
                  <Pane className="col-span-2" />
                  <Pane />
                  <Pane className="outline-2 -outline-offset-1 outline-white">
                    <DynamicInput />
                  </Pane>
                  <ViewportToolbar />
                </div>
                <VScroll />
              </div>
              <LayoutTabs />
              <div className="h-[22px] shrink-0 border-l-2 border-b-4 border-l-[#888] border-b-[#fafafa] bg-[#f1edec]" />
            </div>

            <div className="w-[13px] shrink-0 overflow-hidden pt-[2px]">
              <HGrip />
              <VTools names={modifyTools} className="h-[281px] pl-px" />
              <div className="h-[4px] border-b border-[#aaa] mb-[3px]" />
              <HGrip />
              <VTools names={['front', 'back', 'above', 'under']} className="h-[66px] pl-px" />
            </div>
          </div>
          <CommandWindow />
        </div>
      </main>
      <StatusBar />

      {/* Watermark partly hidden behind the brand plate */}
      <div className="absolute right-[180px] bottom-[17px] w-[53px] overflow-hidden font-['Liberation_Sans',sans-serif] text-[#f7f7f7] [text-shadow:0_0_2px_#aaa]">
        <p className="text-[40px] leading-[42px] font-bold">Ba</p>
        <p className="text-[24px] leading-[30px]">jing</p>
      </div>
      <svg viewBox="0 0 30 24" className="absolute right-[130px] bottom-[83px] w-[30px] h-6" fill="#b5b5b5" aria-hidden="true">
        <ellipse cx="7.500" cy="11" rx="6" ry="11" />
        <ellipse cx="23" cy="12" rx="6.500" ry="11" />
      </svg>
      <Brand />
    </div>
  );
}
